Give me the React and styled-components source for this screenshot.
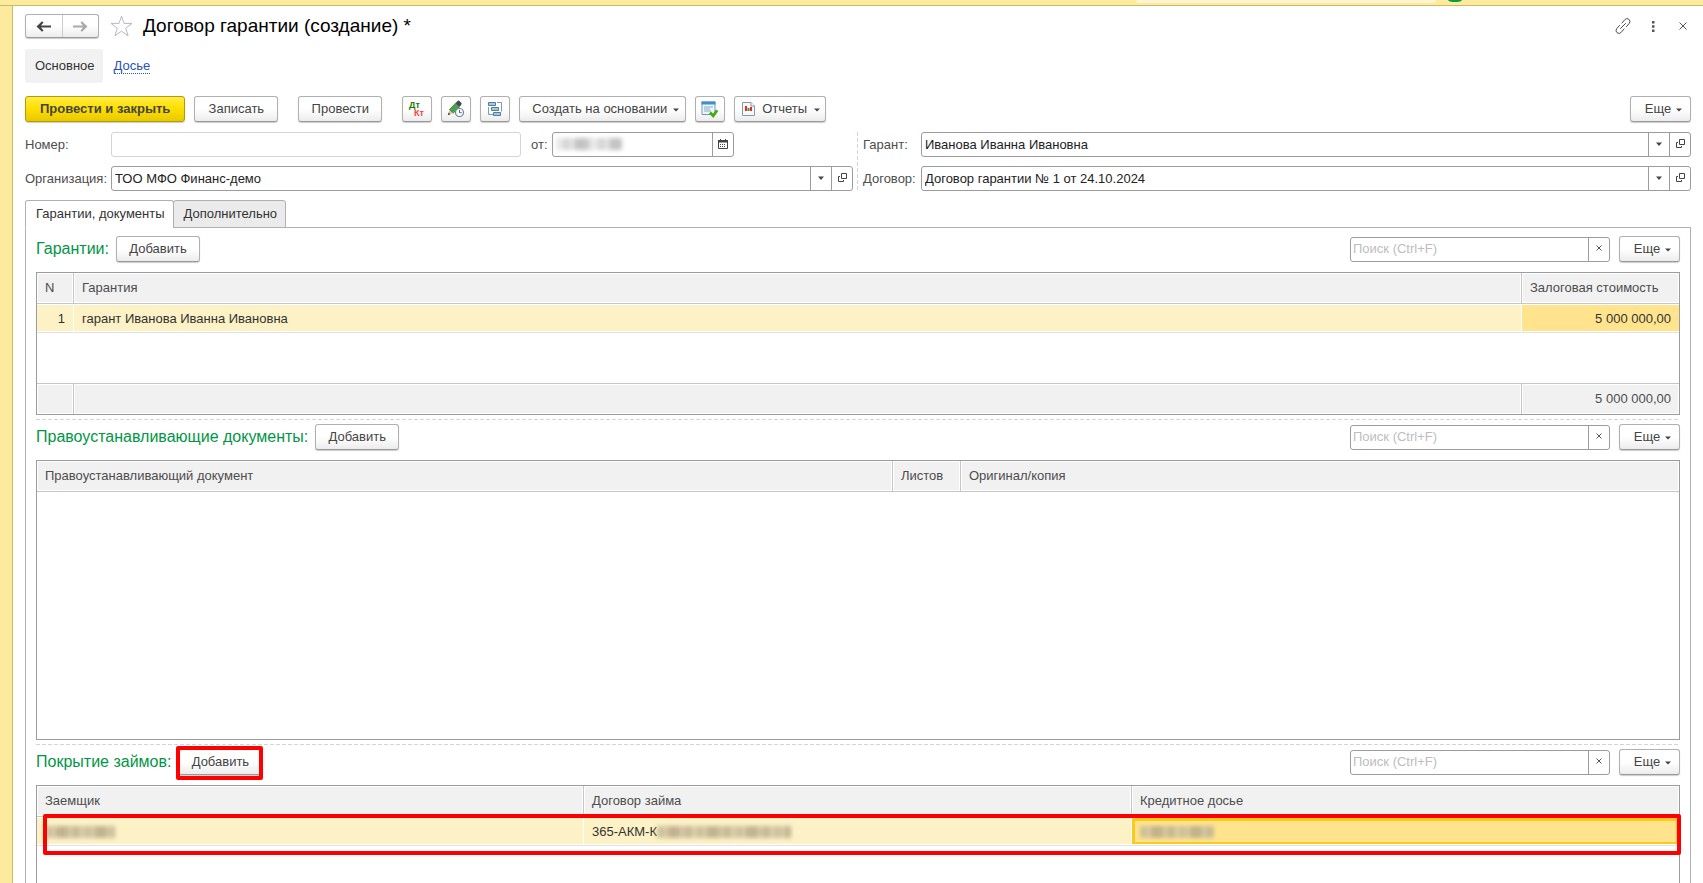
import React from 'react';
import styled, { createGlobalStyle, css } from 'styled-components';


function CaretIcon() {
  return (
    <svg width="6" height="4" viewBox="0 0 6 4" aria-hidden="true">
      <path d="M0 0.5h6L3 4z" fill="#444" />
    </svg>
  )
}

function MenuCaret() {
  return (
    <svg width="6" height="6" viewBox="0 0 6 6" aria-hidden="true">
      <path d="M0 2.5h6L3 5.500z" fill="#444" />
    </svg>
  )
}

function OpenIcon() {
  return (
    <svg width="9" height="9" viewBox="0 0 9 9" fill="none" stroke="#444" aria-hidden="true">
      <path d="M3.5 0.5h5v5h-5z" />
      <path d="M2 3.5H0.5v5h5V7" />
    </svg>
  )
}

function CalendarIcon() {
  return (
    <svg width="10" height="10" viewBox="0 0 10 10" aria-hidden="true">
      <path d="M0.5 1.5h9v8h-9z" fill="#fff" stroke="#444" />
      <path d="M0 1h10v2.500H0zM2 0h1v2H2zM7 0h1v2H7z" fill="#444" />
      <path d="M2 5h1v1H2zM4 5h1v1H4zM6 5h1v1H6zM2 7h1v1H2zM4 7h1v1H4zM6 7h1v1H6z" fill="#444" />
    </svg>
  )
}

function ClearIcon() {
  return (
    <svg width="6" height="6" viewBox="0 0 6 6" stroke="#555" aria-hidden="true">
      <path d="M0.5 0.5l5 5M5.5 0.5l-5 5" />
    </svg>
  )
}

function ArrowIcon({ color, flip }) {
  return (
    <svg width="15" height="11" viewBox="0 0 15 11" fill={color} aria-hidden="true">
      <path d={flip ? 'M0 4.500h10L7.500 1.500 9 0.300 14.500 5.500 9 10.700 7.500 9.500 10 6.500H0z' : 'M15 4.500H5L7.500 1.500 6 0.300 0.500 5.500 6 10.700 7.500 9.500 5 6.500h10z'} />
    </svg>
  )
}

function StarIcon() {
  return (
    <svg width="23" height="22" viewBox="0 0 23 22" fill="#fff" stroke="#b4b9bf" aria-hidden="true">
      <path d="M11.5 1.2l2.5 7.2h8l-6.3 4.8 2.4 7.6-6.6-4.6-6.6 4.6 2.4-7.6L1 8.400h8z" />
    </svg>
  )
}

function LinkIcon() {
  return (
    <svg width="16" height="16" viewBox="0 0 16 16" fill="none" stroke="#4d4d4d" strokeLinecap="round" aria-hidden="true">
      <path d="M7 5l2.800-3.300a2.800 2.800 0 0 1 4.500 3.600l-2.800 3.300" />
      <path d="M9 11l-2.800 3.300a2.800 2.800 0 0 1-4.500-3.600l2.800-3.300" />
      <path d="M5.500 10.500l5-5" />
    </svg>
  )
}

function DotsIcon() {
  return (
    <svg width="3" height="11" viewBox="0 0 3 11" fill="#555" aria-hidden="true">
      <path d="M0 0h2.500v2.500H0zM0 4.200h2.500v2.500H0zM0 8.400h2.500v2.500H0z" />
    </svg>
  )
}

function CloseIcon() {
  return (
    <svg width="8" height="8" viewBox="0 0 8 8" stroke="#555" aria-hidden="true">
      <path d="M0.500 0.500l7 7M7.500 0.500l-7 7" />
    </svg>
  )
}

function DtKtIcon() {
  return (
    <svg width="18" height="18" viewBox="0 0 18 18" aria-hidden="true">
      <g fontFamily="'Liberation Sans', sans-serif" fontWeight="bold" fontSize="9">
        <text x="1" y="8" fill="#1d7a00">Дт</text>
        <text x="6" y="16" fill="#ff3b3b">Кт</text>
      </g>
    </svg>
  )
}

function PencilClockIcon() {
  return (
    <svg width="18" height="18" viewBox="0 0 18 18" aria-hidden="true">
      <path d="M1 15l1.500-5.500 3.800 3.600z" fill="#e8c48a" />
      <path d="M0.800 15.200l0.800-2.700 1.900 1.800z" fill="#444" />
      <path d="M2.500 9.500l6-6.300 4 3.800-6.200 6.100z" fill="#4aa24a" stroke="#2d7435" strokeWidth="0.700" />
      <path d="M8.500 3.200l2-2.200c.8-.7 1.500-.4 2.200.2l1.500 1.500c.6.700.6 1.300 0 2L12.500 7z" fill="#3f4c50" />
      <circle cx="12.500" cy="12.500" r="4" fill="#fff" stroke="#6c8399" strokeWidth="1.200" />
      <path d="M12.500 10v2.700h2.200" fill="none" stroke="#4d6478" />
    </svg>
  )
}

function StructureIcon() {
  return (
    <svg width="16" height="16" viewBox="0 0 16 16" fill="#a9c6da" stroke="#4f7d9b" aria-hidden="true">
      <path d="M10 1.500h4.500v9M1.500 6v7.500H6" fill="none" stroke="#7d9db4" />
      <path d="M1.500 1.500h7v3h-7zM4.500 6.500h7v3h-7zM6.500 11.500h7v3h-7z" />
    </svg>
  )
}

function TaskIcon() {
  return (
    <svg width="18" height="17" viewBox="0 0 18 17" aria-hidden="true">
      <path d="M1 1h13v12.500H1z" fill="#eef6fb" stroke="#6d9dbd" />
      <path d="M0.500 0.500h14v3H0.500z" fill="#3f8fd0" />
      <path d="M3 6h9M3 8h6M3 10h7" stroke="#88a9bd" />
      <path d="M9 11.500l3.200 3.300 4-5.500" fill="none" stroke="#45a913" strokeWidth="2.800" />
    </svg>
  )
}

function ReportIcon() {
  return (
    <svg width="13" height="14" viewBox="0 0 13 14" aria-hidden="true">
      <path d="M0.500 0.500h8.500l3.500 3.500v9.500H0.500z" fill="#f5f9fb" stroke="#8499aa" />
      <path d="M9 0.500V4h3.500" fill="#fff" stroke="#8499aa" />
      <path d="M3 4h2v5H3z" fill="#f22" />
      <path d="M5.500 6h2v3h-2z" fill="#2a9e3c" />
      <path d="M8 5h2v4H8z" fill="#e22" />
    </svg>
  )
}


function RefField({ id, label, labelWidth, value }) {
  return (
    <FieldRow>
      <Label htmlFor={id} $width={labelWidth}>{label}</Label>
      <FieldBox>
        <FieldInput id={id} defaultValue={value} />
        <FieldButton aria-label="Выбрать"><CaretIcon /></FieldButton>
        <FieldButton aria-label="Открыть"><OpenIcon /></FieldButton>
      </FieldBox>
    </FieldRow>
  )
}

function SectionBar({ title, marked }) {
  return (
    <SectionHead>
      <SectionTitle>{title}</SectionTitle>
      <AddWrap $marked={marked}>
        <Button>Добавить</Button>
      </AddWrap>
      <Spacer />
      <SearchBox>
        <SearchInput placeholder="Поиск (Ctrl+F)" aria-label={`Поиск, ${title}`} />
        <FieldButton aria-label="Очистить"><ClearIcon /></FieldButton>
      </SearchBox>
      <MoreButton>Еще<MenuCaret /></MoreButton>
    </SectionHead>
  )
}

export default function App() {
  return (
    <Page>
      <GlobalStyle />
      <TopBar>
        <TopSearch />
        <TopBadge />
      </TopBar>
      <Body>
        <SideStrip />
        <Form>
          <TitleRow>
            <NavGroup>
              <NavButton aria-label="Назад"><ArrowIcon color="#444" /></NavButton>
              <NavButton aria-label="Вперед"><ArrowIcon color="#aaa" flip /></NavButton>
            </NavGroup>
            <PlainButton aria-label="В избранное" $width="23px"><StarIcon /></PlainButton>
            <Title>Договор гарантии (создание) *</Title>
            <Spacer />
            <WindowTools>
              <PlainButton aria-label="Ссылка" $width="16px"><LinkIcon /></PlainButton>
              <PlainButton aria-label="Меню" $width="16px"><DotsIcon /></PlainButton>
              <PlainButton aria-label="Закрыть" $width="16px"><CloseIcon /></PlainButton>
            </WindowTools>
          </TitleRow>

          <SubNav>
            <SubNavCurrent>Основное</SubNavCurrent>
            <SubNavLink href="#dossier">Досье</SubNavLink>
          </SubNav>

          <Toolbar>
            <PrimaryButton>Провести и закрыть</PrimaryButton>
            <Button>Записать</Button>
            <ToolGap />
            <Button>Провести</Button>
            <ToolGap />
            <IconButton aria-label="Дт Кт"><DtKtIcon /></IconButton>
            <IconButton aria-label="История"><PencilClockIcon /></IconButton>
            <IconButton aria-label="Структура"><StructureIcon /></IconButton>
            <MenuButton>Создать на основании<MenuCaret /></MenuButton>
            <IconButton aria-label="Задача"><TaskIcon /></IconButton>
            <ReportButton><ReportIcon />Отчеты<MenuCaret /></ReportButton>
            <Spacer />
            <MoreButton>Еще<MenuCaret /></MoreButton>
          </Toolbar>

          <Fields>
            <FieldColumn>
              <FieldRow>
                <Label htmlFor="number" $width="86px">Номер:</Label>
                <FieldBox $light>
                  <FieldInput id="number" />
                </FieldBox>
                <DateLabel htmlFor="date">от:</DateLabel>
                <DateBox>
                  <Smudge $width="66px" />
                  <FieldInput id="date" />
                  <FieldButton aria-label="Календарь"><CalendarIcon /></FieldButton>
                </DateBox>
              </FieldRow>
              <RefField id="org" label="Организация:" labelWidth="86px" value="ТОО МФО Финанс-демо" />
            </FieldColumn>
            <FieldSplit />
            <FieldColumn>
              <RefField id="guarantor" label="Гарант:" labelWidth="58px" value="Иванова Иванна Ивановна" />
              <RefField id="contract" label="Договор:" labelWidth="58px" value="Договор гарантии № 1 от 24.10.2024" />
            </FieldColumn>
          </Fields>

          <Tabs role="tablist">
            <Tab role="tab" aria-selected="true" $active>Гарантии, документы</Tab>
            <Tab role="tab" aria-selected="false">Дополнительно</Tab>
          </Tabs>

          <Panel>
            <SectionBar title="Гарантии:" />
            <TableBox>
              <Table>
                <colgroup>
                  <Col $width="37px" />
                  <Col />
                  <Col $width="157px" />
                </colgroup>
                <thead>
                  <tr>
                    <Th>N</Th>
                    <Th>Гарантия</Th>
                    <Th>Залоговая стоимость</Th>
                  </tr>
                </thead>
                <tbody>
                  <tr>
                    <Td $right>1</Td>
                    <Td>гарант Иванова Иванна Ивановна</Td>
                    <Td $right $current>5 000 000,00</Td>
                  </tr>
                  <FillerRow><td colSpan="3" /></FillerRow>
                </tbody>
                <tfoot>
                  <tr>
                    <FootTd />
                    <FootTd />
                    <FootTd>5 000 000,00</FootTd>
                  </tr>
                </tfoot>
              </Table>
            </TableBox>

            <Splitter />
            <SectionBar title="Правоустанавливающие документы:" />
            <TableBox $height="280px">
              <Table>
                <colgroup>
                  <Col />
                  <Col $width="68px" />
                  <Col $width="718px" />
                </colgroup>
                <thead>
                  <tr>
                    <Th>Правоустанавливающий документ</Th>
                    <Th>Листов</Th>
                    <Th>Оригинал/копия</Th>
                  </tr>
                </thead>
              </Table>
            </TableBox>

            <Splitter />
            <SectionBar title="Покрытие займов:" marked />
            <TableBox $height="160px">
              <Table>
                <colgroup>
                  <Col />
                  <Col $width="548px" />
                  <Col $width="547px" />
                </colgroup>
                <thead>
                  <tr>
                    <Th>Заемщик</Th>
                    <Th>Договор займа</Th>
                    <Th>Кредитное досье</Th>
                  </tr>
                </thead>
                <tbody>
                  <tr>
                    <Td><CellSmudge $width="70px" $warm /></Td>
                    <Td>365-АКМ-К<CellSmudge $width="134px" $warm /></Td>
                    <Td $current $framed><CellSmudge $width="74px" $warm /></Td>
                  </tr>
                </tbody>
              </Table>
              <RowMark />
            </TableBox>
          </Panel>
        </Form>
      </Body>
    </Page>
  )
}


const GlobalStyle = createGlobalStyle`
  * {
    box-sizing: border-box;
  }
  body {
    margin: 0;
    background: #fff;
    color: #333;
    font: 13px/16px 'Liberation Sans', Arial, sans-serif;
  }
  button, input {
    font: inherit;
    color: inherit;
  }
  svg {
    display: block;
    flex: none;
  }
`;

const Page = styled.div`
  height: 100vh;
  display: flex;
  flex-direction: column;
  overflow: hidden;
`;

const TopBar = styled.div`
  flex: none;
  height: 6px;
  display: flex;
  justify-content: flex-end;
  align-items: flex-start;
  gap: 12px;
  padding-right: 241px;
  background: #fceb9c;
  border-bottom: 1px solid #c9b968;
`;

const TopSearch = styled.div`
  width: 300px;
  height: 3px;
  background: #fdf5d2;
  border-radius: 0 0 3px 3px;
`;

const TopBadge = styled.div`
  width: 14px;
  height: 2px;
  background: #0a9b46;
  border-radius: 0 0 50% 50% / 0 0 100% 100%;
`;

const Body = styled.div`
  flex: 1;
  min-height: 0;
  display: flex;
`;

const SideStrip = styled.div`
  flex: none;
  width: 13px;
  background: #fceb9c;
  border-right: 1px solid #c9b968;
`;

const Form = styled.main`
  flex: 1;
  min-width: 0;
  padding: 8px 12px 0;
`;

const Spacer = styled.div`
  flex: 1;
`;

const TitleRow = styled.div`
  height: 24px;
  display: flex;
  align-items: center;
`;

const Title = styled.h1`
  margin: 0 0 0 10px;
  font-size: 19px;
  line-height: 24px;
  font-weight: normal;
  color: #000;
`;

const buttonFace = css`
  border: 1px solid #b0b0b0;
  border-bottom-color: #999;
  border-radius: 3px;
  background: linear-gradient(#fff 50%, #ececec);
  box-shadow: 0 1px 1px rgba(0, 0, 0, 0.2);
`;

const NavGroup = styled.div`
  ${buttonFace}
  width: 74px;
  height: 24px;
  display: flex;
  margin-right: 11px;
`;

const NavButton = styled.button`
  flex: 1;
  display: flex;
  align-items: center;
  justify-content: center;
  padding: 0;
  border: 0;
  background: none;

  & + & {
    border-left: 1px solid #ccc;
  }
`;

const PlainButton = styled.button`
  width: ${props => props.$width};
  height: 22px;
  display: flex;
  align-items: center;
  justify-content: center;
  padding: 0;
  border: 0;
  background: none;
`;

const WindowTools = styled.div`
  display: flex;
  gap: 14px;
`;

const SubNav = styled.nav`
  display: flex;
  align-items: center;
  gap: 11px;
  margin-top: 11px;
`;

const SubNavCurrent = styled.span`
  padding: 9px 8px 9px 10px;
  border-radius: 3px;
  background: #f2f2f2;
`;

const SubNavLink = styled.a`
  color: #2a52b8;
  text-decoration: none;
  line-height: 14px;
  border-bottom: 1px dotted #2a52b8;
`;

const Toolbar = styled.div`
  display: flex;
  gap: 9px;
  margin-top: 13px;
`;

const ToolGap = styled.div`
  width: 2px;
`;

const Button = styled.button`
  ${buttonFace}
  min-width: 84px;
  height: 26px;
  display: flex;
  align-items: center;
  justify-content: center;
  padding: 0 12px;
  color: #444;
  white-space: nowrap;
`;

const PrimaryButton = styled(Button)`
  padding: 0 14px;
  border-color: #b39b00;
  background: linear-gradient(#ffec4a, #ffe000 45%, #e8c900);
  font-weight: bold;
`;

const IconButton = styled(Button)`
  min-width: 30px;
  padding: 0;
`;

const MenuButton = styled(Button)`
  gap: 6px;
  padding: 0 6px 0 12px;
`;

const ReportButton = styled(MenuButton)`
  gap: 7px;
  padding: 0 5px 0 7px;
`;

const MoreButton = styled(Button)`
  min-width: 61px;
  gap: 5px;
  padding: 0 6px 0 12px;
`;

const Fields = styled.div`
  display: flex;
  margin-top: 10px;
`;

const FieldColumn = styled.div`
  flex: 1;
  min-width: 0;
  display: flex;
  flex-direction: column;
  gap: 9px;
`;

const FieldSplit = styled.div`
  width: 1px;
  margin: 0 5px 0 4px;
  background: repeating-linear-gradient(#d4d4d4 0 4px, transparent 4px 6px);
`;

const FieldRow = styled.div`
  display: flex;
  align-items: center;
`;

const Label = styled.label`
  flex: none;
  width: ${props => props.$width};
  color: #4d4d4d;
`;

const DateLabel = styled(Label)`
  width: 21px;
  margin-left: 10px;
`;

const FieldBox = styled.div`
  flex: 1;
  min-width: 0;
  height: 25px;
  display: flex;
  border: 1px solid ${props => (props.$light ? '#d4d4d4' : '#9c9c9c')};
  border-radius: 3px;
  background: #fff;
`;

const DateBox = styled(FieldBox)`
  position: relative;
  flex: none;
  width: 182px;
  margin-right: 119px;
`;

const FieldInput = styled.input`
  flex: 1;
  min-width: 0;
  padding: 0 3px;
  border: 0;
  background: transparent;
  color: #222;
  outline: none;
`;

const FieldButton = styled.button`
  width: 21px;
  display: flex;
  align-items: center;
  justify-content: center;
  padding: 0 0 2px;
  border: 0;
  border-left: 1px solid #9c9c9c;
  background: none;
`;

const coolInk = '#e6e6e6 0 6px, #cfcfcf 9px 12px, #e2e2e2 15px 17px, #bdbdbd 20px 30px, #d6d6d6 33px 35px';
const warmInk = '#c9bc98 0 6px, #d6c9a6 8px 10px, #bbad8a 12px 21px, #d0c39f 24px 27px, #c0b390 29px 34px, #dccfaa 36px 39px';

const Smudge = styled.span`
  position: absolute;
  top: 5px;
  left: 3px;
  width: ${props => props.$width};
  height: 12px;
  opacity: 0.9;
  filter: blur(2px);
  background: repeating-linear-gradient(90deg, ${props => (props.$warm ? warmInk : coolInk)});
`;

const CellSmudge = styled(Smudge)`
  position: static;
  display: inline-block;
  vertical-align: middle;
`;

const Tabs = styled.div`
  display: flex;
  margin-top: 9px;
`;

const Tab = styled.button`
  height: 28px;
  margin: 0 0 -1px;
  padding: 0 8px 0 10px;
  border: 1px solid #b0b0b0;
  border-bottom-color: ${props => (props.$active ? '#fff' : '#b0b0b0')};
  border-radius: 3px 3px 0 0;
  background: ${props => (props.$active ? '#fff' : '#ebebeb')};
  z-index: 1;

  & + & {
    margin-left: -1px;
  }
`;

const Panel = styled.section`
  padding: 8px 10px 0;
  border: 1px solid #b0b0b0;
  border-bottom: 0;
`;

const SectionHead = styled.div`
  display: flex;
  align-items: center;
  margin-bottom: 10px;
`;

const SectionTitle = styled.h2`
  margin: 0 7px 0 0;
  font-size: 16px;
  line-height: 20px;
  font-weight: normal;
  color: #009646;
`;

const AddWrap = styled.div`
  position: relative;

  ${props => props.$marked && css`
    &::after {
      content: '';
      position: absolute;
      inset: -3px -1px -5px -2px;
      border: 4px solid #f00;
      border-radius: 2px;
      pointer-events: none;
    }
  `}
`;

const SearchBox = styled(FieldBox)`
  flex: none;
  width: 260px;
  margin-right: 9px;
`;

const SearchInput = styled(FieldInput)`
  padding: 0 2px;

  &::placeholder {
    color: #bdbdbd;
  }
`;

const Splitter = styled.div`
  height: 1px;
  margin: 4px 0;
  background: repeating-linear-gradient(90deg, #d4d4d4 0 4px, transparent 4px 6px);
`;

const TableBox = styled.div`
  position: relative;
  height: ${props => props.$height || 'auto'};
  border: 1px solid #9c9c9c;
`;

const Table = styled.table`
  width: 100%;
  table-layout: fixed;
  border-collapse: separate;
  border-spacing: 0;
`;

const Col = styled.col`
  width: ${props => props.$width || 'auto'};
`;

const Th = styled.th`
  height: 31px;
  padding: 0 8px;
  border-bottom: 1px solid #c6c6c6;
  border-right: 1px solid #c6c6c6;
  background: #f1f1f1;
  box-shadow: inset 0 0 0 1px #fff;
  color: #4d4d4d;
  font-weight: normal;
  text-align: left;

  &:last-child {
    border-right: 0;
  }
`;

const Td = styled.td`
  height: 29px;
  padding: 0 8px;
  border-top: 1px solid #fff;
  border-right: 1px solid #fff;
  border-bottom: 1px solid #e2e2e2;
  background: ${props => (props.$current ? '#ffe48d' : '#fdf1c6')};
  box-shadow: inset 0 -1px 0 #fff;
  text-align: ${props => (props.$right ? 'right' : 'left')};
  white-space: nowrap;

  &:last-child {
    border-right: 0;
  }

  ${props => props.$framed && css`
    box-shadow: inset 0 -1px 0 #fff, inset 0 0 0 3px #fbca1d;
  `}
`;

const FillerRow = styled.tr`
  height: 50px;
`;

const FootTd = styled.td`
  height: 31px;
  padding: 0 8px;
  border-top: 1px solid #c6c6c6;
  border-right: 1px solid #c6c6c6;
  background: #f1f1f1;
  box-shadow: inset 0 0 0 1px #fff;
  color: #4d4d4d;
  text-align: right;

  &:last-child {
    border-right: 0;
  }
`;

const RowMark = styled.div`
  position: absolute;
  top: 28px;
  left: 6px;
  right: -2px;
  height: 41px;
  border: 4px solid #f00;
  border-radius: 2px;
  pointer-events: none;
`;
